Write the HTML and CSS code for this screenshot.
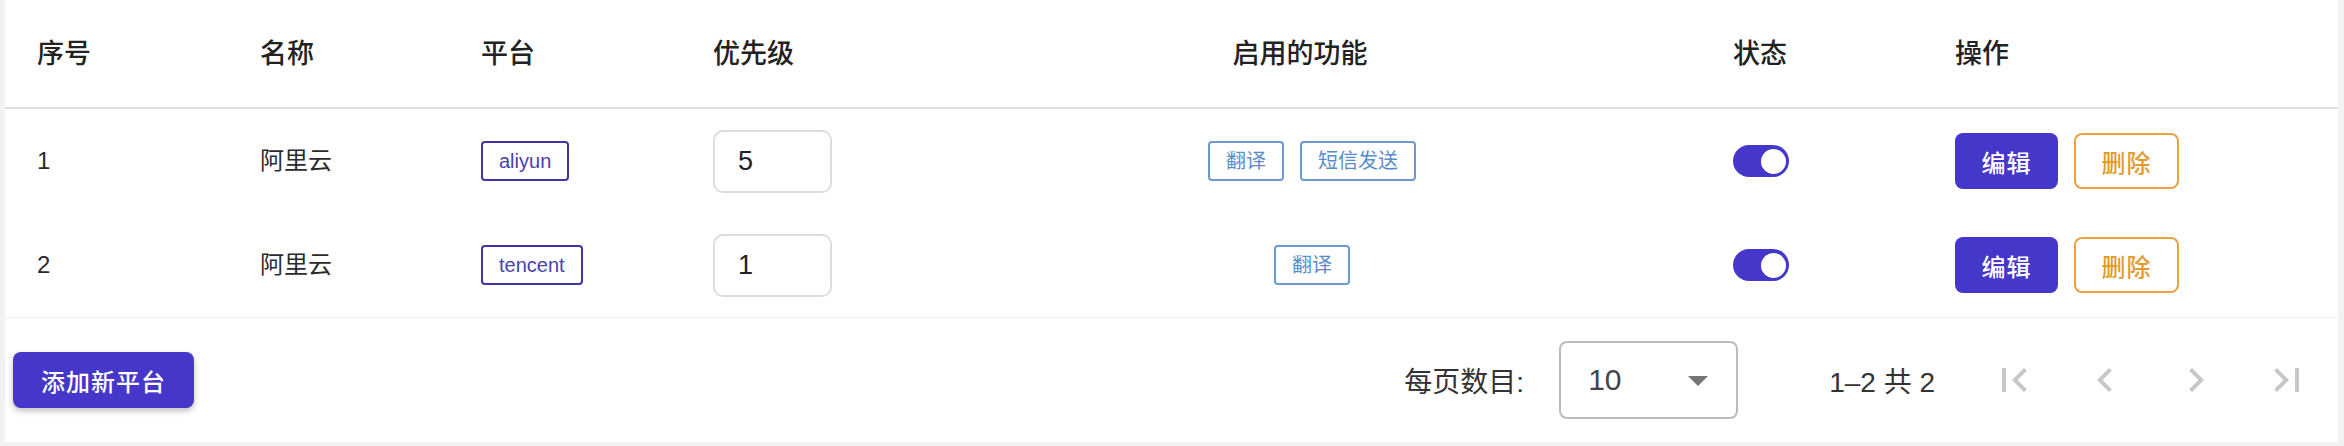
FILE: index.html
```html
<!DOCTYPE html>
<html lang="zh-CN">
<head>
    <meta charset="UTF-8">
    <meta name="viewport" content="width=device-width, initial-scale=1.0">
    <title>平台管理</title>
    <link rel="stylesheet" href="styles.css">
</head>
<body>
    <div class="card">
        <div class="grid-row head">
            <div class="cell">序号</div>
            <div class="cell">名称</div>
            <div class="cell">平台</div>
            <div class="cell">优先级</div>
            <div class="cell center head-features">启用的功能</div>
            <div class="cell">状态</div>
            <div class="cell">操作</div>
        </div>

        <div class="grid-row">
            <div class="cell">1</div>
            <div class="cell">阿里云</div>
            <div class="cell"><span class="chip chip-platform">aliyun</span></div>
            <div class="cell"><input class="priority" type="text" value="5"></div>
            <div class="cell center">
                <span class="chip chip-feature">翻译</span>
                <span class="chip chip-feature">短信发送</span>
            </div>
            <div class="cell"><span class="toggle on"><span class="knob"></span></span></div>
            <div class="cell actions">
                <button class="btn btn-edit">编辑</button>
                <button class="btn btn-delete">删除</button>
            </div>
        </div>

        <div class="grid-row last">
            <div class="cell">2</div>
            <div class="cell">阿里云</div>
            <div class="cell"><span class="chip chip-platform">tencent</span></div>
            <div class="cell"><input class="priority" type="text" value="1"></div>
            <div class="cell center">
                <span class="chip chip-feature">翻译</span>
            </div>
            <div class="cell"><span class="toggle on"><span class="knob"></span></span></div>
            <div class="cell actions">
                <button class="btn btn-edit">编辑</button>
                <button class="btn btn-delete">删除</button>
            </div>
        </div>

        <div class="footer">
            <button class="btn btn-add">添加新平台</button>
            <div class="pager">
                <span class="pager-label">每页数目:</span>
                <div class="select">
                    <span>10</span>
                    <svg class="select-arrow" viewBox="0 0 24 24"><path d="M7 10l5 5 5-5z"/></svg>
                </div>
                <span class="pager-range">1–2 共 2</span>
                <div class="pager-nav">
                    <span class="nav-btn"><svg viewBox="0 0 24 24"><path d="M18.41 16.59L13.82 12l4.59-4.59L17 6l-6 6 6 6zM6 6h2v12H6z"/></svg></span>
                    <span class="nav-btn"><svg viewBox="0 0 24 24"><path d="M15.41 16.59L10.83 12l4.58-4.59L14 6l-6 6 6 6 1.41-1.41z"/></svg></span>
                    <span class="nav-btn"><svg viewBox="0 0 24 24"><path d="M8.59 16.59L13.17 12 8.59 7.41 10 6l6 6-6 6-1.41-1.41z"/></svg></span>
                    <span class="nav-btn"><svg viewBox="0 0 24 24"><path d="M5.59 7.41L10.18 12l-4.59 4.59L7 18l6-6-6-6zM16 6h2v12h-2z"/></svg></span>
                </div>
            </div>
        </div>
    </div>
</body>
</html>
```

FILE: styles.css
```css
body {
    margin: 0;
    padding: 0 6px 4px 5px;
    background: #f2f2f2;
    font-family: 'Liberation Sans', 'Noto Sans CJK SC', sans-serif;
    color: #2b2b2b;
}
.card {
    background: #ffffff;
}
.grid-row {
    display: grid;
    grid-template-columns: 223px 221px 232px 242px 778px 222px 1fr;
    align-items: center;
    height: 104px;
    font-size: 24px;
    line-height: 30px;
}
.grid-row.head {
    height: 107px;
    border-bottom: 2px solid #e0e0e0;
    font-size: 27px;
    font-weight: 500;
    color: #222222;
}
.grid-row.last {
    border-bottom: 1px solid #f0f0f0;
}
.cell {
    padding-left: 32px;
    display: flex;
    align-items: center;
}
.cell.center {
    padding-left: 0;
    justify-content: center;
    gap: 16px;
}
.head-features {
    padding-right: 24px;
}
.chip {
    display: inline-flex;
    align-items: center;
    height: 40px;
    box-sizing: border-box;
    padding: 0 16px;
    border: 2px solid;
    border-radius: 4px;
    font-size: 20px;
}
.chip-platform {
    border-color: #3d35a8;
    color: #4a42b0;
}
.chip-feature {
    border-color: #6c9ad0;
    color: #5a8cca;
}
.priority {
    width: 119px;
    height: 63px;
    box-sizing: border-box;
    border: 2px solid #dddddd;
    border-radius: 10px;
    padding: 0 0 0 23px;
    font-family: inherit;
    font-size: 27px;
    color: #222222;
    outline: none;
}
.toggle {
    position: relative;
    display: inline-block;
    width: 56px;
    height: 32px;
    border-radius: 16px;
    background: #4537c9;
}
.toggle .knob {
    position: absolute;
    top: 4px;
    right: 3px;
    width: 25px;
    height: 25px;
    border-radius: 50%;
    background: #ffffff;
}
.actions {
    gap: 16px;
}
.btn {
    font-family: inherit;
    font-size: 24px;
    font-weight: 500;
    letter-spacing: 1px;
    height: 56px;
    border-radius: 8px;
    box-sizing: border-box;
    cursor: pointer;
}
.btn-edit {
    width: 103px;
    background: #4537c9;
    color: #ffffff;
    border: none;
}
.btn-delete {
    width: 105px;
    background: #ffffff;
    color: #e39a2e;
    border: 2px solid #eea23e;
}
.footer {
    height: 124px;
    display: flex;
    align-items: center;
    justify-content: space-between;
    padding-left: 8px;
}
.btn-add {
    width: 181px;
    background: #4537c9;
    color: #ffffff;
    border: none;
    box-shadow: 0 3px 6px rgba(0, 0, 0, 0.25);
}
.pager {
    display: flex;
    align-items: center;
    font-size: 28px;
    color: #333333;
    padding-right: 15px;
}
.select {
    display: flex;
    align-items: center;
    justify-content: space-between;
    width: 179px;
    height: 78px;
    box-sizing: border-box;
    margin-left: 35px;
    padding: 0 28px 0 27px;
    border: 2px solid #bcbcbc;
    border-radius: 8px;
    font-size: 30px;
    color: #444444;
}
.select-arrow {
    width: 48px;
    height: 48px;
    margin-right: -14px;
    fill: #757575;
}
.pager-range {
    margin-left: 91px;
}
.pager-nav {
    display: flex;
    gap: 19px;
    margin-left: 43px;
}
.nav-btn {
    display: flex;
    align-items: center;
    justify-content: center;
    width: 72px;
    height: 72px;
}
.nav-btn svg {
    width: 48px;
    height: 48px;
    fill: rgba(0, 0, 0, 0.22);
}
```
